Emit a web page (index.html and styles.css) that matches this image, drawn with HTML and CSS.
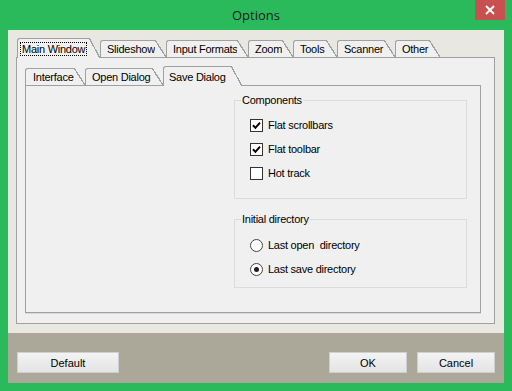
FILE: index.html
```html
<!DOCTYPE html>
<html lang="en">
<head>
    <meta charset="UTF-8">
    <title>Options</title>
    <link rel="stylesheet" href="styles.css">
</head>
<body>
    <div class="window">
        <div class="titlebar">
            <span class="title">Options</span>
            <div class="close">
                <svg width="10" height="10" viewBox="0 0 10 10">
                    <path d="M1 1 L9 9 M9 1 L1 9" stroke="#fff" stroke-width="1.8" fill="none"/>
                </svg>
            </div>
        </div>

        <div class="client">
            <div class="main">
                <div class="tabs outer-tabs">
                    <div class="tab active w-main"><span class="focus">Main Window</span></div>
                    <div class="tab w-slide">Slideshow</div>
                    <div class="tab w-input">Input Formats</div>
                    <div class="tab w-zoom">Zoom</div>
                    <div class="tab w-tools">Tools</div>
                    <div class="tab w-scan">Scanner</div>
                    <div class="tab w-other">Other</div>
                </div>

                <div class="page">
                    <div class="tabs inner-tabs">
                        <div class="tab w-iface">Interface</div>
                        <div class="tab w-open">Open Dialog</div>
                        <div class="tab active w-save">Save Dialog</div>
                    </div>

                    <div class="sheet">
                        <fieldset class="group group-components">
                            <legend>Components</legend>
                            <label class="row">
                                <span class="check">
                                    <svg width="9" height="9" viewBox="0 0 9 9">
                                        <path d="M1 4.3 L3.4 6.8 L8 1.6" stroke="#000" stroke-width="2" fill="none"/>
                                    </svg>
                                </span>
                                Flat scrollbars
                            </label>
                            <label class="row">
                                <span class="check">
                                    <svg width="9" height="9" viewBox="0 0 9 9">
                                        <path d="M1 4.3 L3.4 6.8 L8 1.6" stroke="#000" stroke-width="2" fill="none"/>
                                    </svg>
                                </span>
                                Flat toolbar
                            </label>
                            <label class="row">
                                <span class="check"></span>
                                Hot track
                            </label>
                        </fieldset>

                        <fieldset class="group group-dir">
                            <legend>Initial directory</legend>
                            <label class="row">
                                <span class="radio"></span>
                                Last open&nbsp; directory
                            </label>
                            <label class="row">
                                <span class="radio checked"></span>
                                Last save directory
                            </label>
                        </fieldset>
                    </div>
                </div>
            </div>

            <div class="buttons">
                <button class="btn btn-default">Default</button>
                <div class="spacer"></div>
                <button class="btn">OK</button>
                <button class="btn">Cancel</button>
            </div>
        </div>
    </div>
</body>
</html>
```

FILE: styles.css
```css
* {
    margin: 0;
    padding: 0;
    box-sizing: border-box;
}

body {
    width: 512px;
    height: 391px;
    overflow: hidden;
    background: #2bba5b;
    font-family: "Liberation Sans", Arial, sans-serif;
    font-size: 11px;
    letter-spacing: -0.25px;
    color: #000;
}

.window {
    display: flex;
    flex-direction: column;
    height: 391px;
}

/* title bar */
.titlebar {
    position: relative;
    height: 30px;
    display: flex;
    align-items: center;
    justify-content: center;
}

.title {
    font-family: "Open Sans", "Noto Sans", sans-serif;
    font-size: 13px;
    letter-spacing: 0;
    color: #1c1c1c;
}

.close {
    position: absolute;
    top: 0;
    right: 7px;
    width: 30px;
    height: 20px;
    background: #c75050;
    display: flex;
    align-items: center;
    justify-content: center;
}

/* client area */
.client {
    flex: 1;
    margin: 0 8px 8px;
    display: flex;
    flex-direction: column;
}

.main {
    height: 303px;
    background: #e9e7e2;
    padding: 8px 9px 9px 8px;
    display: flex;
    flex-direction: column;
}

/* tabs */
.tabs {
    position: relative;
    z-index: 1;
    display: flex;
    align-items: flex-end;
    height: 19px;
    flex-shrink: 0;
}

.outer-tabs {
    padding-left: 1px;
}

.tab {
    position: relative;
    height: 17px;
    margin-right: 11px;
    padding-left: 6px;
    border: 1px solid #a0a0a0;
    border-right: none;
    border-bottom: none;
    border-top-left-radius: 3px;
    background: #f0f0f0;
    display: flex;
    align-items: center;
    white-space: nowrap;
}

.tab::after {
    content: "";
    position: absolute;
    top: -1px;
    right: -11px;
    bottom: 0;
    width: 11px;
    background: linear-gradient(to top right,
        #f0f0f0 calc(50% - 0.6px),
        #a0a0a0 calc(50% - 0.6px),
        #a0a0a0 calc(50% + 0.6px),
        transparent calc(50% + 0.6px));
}

.tab.active {
    height: 20px;
    margin-bottom: -1px;
    padding-left: 3px;
}

.focus {
    outline: 1px dotted #000;
    outline-offset: 0;
    padding: 0 1px;
}

.w-main { width: 72px; }
.w-slide { width: 55px; }
.w-input { width: 71px; }
.w-zoom { width: 34px; }
.w-tools { width: 33px; }
.w-scan { width: 47px; }
.w-other { width: 34px; }

.w-iface { width: 49px; padding-left: 7px; }
.w-open { width: 67px; }
.w-save { width: 68px; }
.inner-tabs .tab.active { padding-left: 5px; }

/* pages */
.page {
    flex: 1;
    border: 1px solid #a0a0a0;
    background: #f0f0f0;
    padding: 8px 13px 10px 8px;
    display: flex;
    flex-direction: column;
}

.sheet {
    flex: 1;
    border: 1px solid #a0a0a0;
    box-shadow: 0 1px 0 #dadada;
    background: #f0f0f0;
    padding: 8px 0 0 208px;
}

/* group boxes */
.group {
    width: 233px;
    border: 1px solid #dcdcdc;
    padding: 6px 0 13px 15px;
}

.group legend {
    margin-left: -9px;
    padding: 0 1px;
    line-height: 13px;
}

.group-dir {
    margin-top: 14px;
    padding-top: 7px;
    padding-bottom: 6px;
}

.row {
    display: flex;
    align-items: center;
    gap: 5px;
    height: 24px;
}

.check {
    width: 13px;
    height: 13px;
    border: 1px solid #333;
    background: #fff;
    display: flex;
    align-items: center;
    justify-content: center;
}

.radio {
    width: 13px;
    height: 13px;
    border: 1px solid #444;
    border-radius: 50%;
    background: #fff;
    display: flex;
    align-items: center;
    justify-content: center;
}

.radio.checked::before {
    content: "";
    width: 5px;
    height: 5px;
    border-radius: 50%;
    background: #1e1e1e;
}

/* bottom button strip */
.buttons {
    flex: 1;
    background: #aba899;
    padding: 19px 9px 0 9px;
    display: flex;
    align-items: flex-start;
    gap: 10px;
}

.spacer {
    flex: 1;
}

.btn {
    width: 78px;
    height: 21px;
    border: 1px solid #cfcfcf;
    background: linear-gradient(#f3f3f3, #e4e4e4);
    font: inherit;
    color: #000;
}

.btn-default {
    width: 102px;
}
```
